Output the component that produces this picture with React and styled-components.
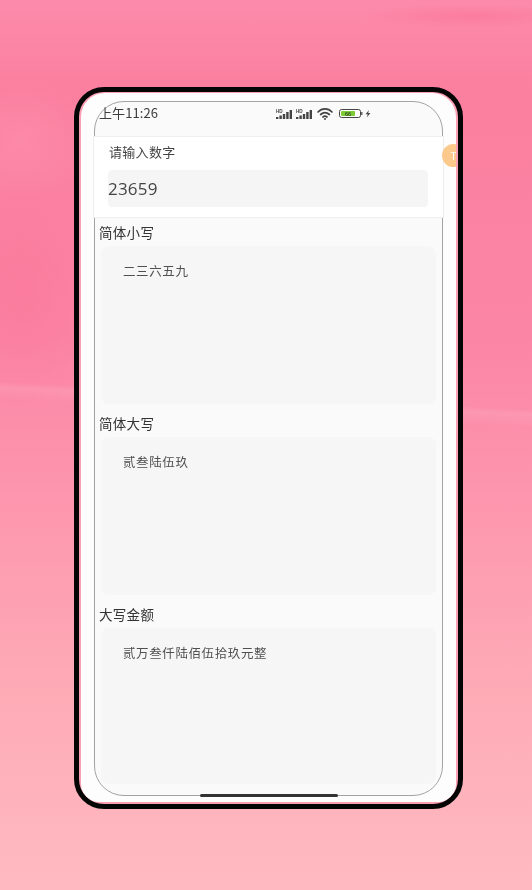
import React from 'react';
import styled, { createGlobalStyle } from 'styled-components';

const GlobalStyle = createGlobalStyle`
  html, body {
    margin: 0;
    padding: 0;
  }
  body {
    font-family: "Noto Sans CJK SC", "Open Sans", "Liberation Sans", sans-serif;
  }
`;

const Page = styled.div`
  box-sizing: border-box;
  width: 532px;
  height: 890px;
  padding: 87px 0 0 74px;
  overflow: hidden;
  background:
    radial-gradient(ellipse 110px 12px at 470px 16px, rgba(250, 105, 145, 0.4), transparent),
    linear-gradient(183deg, transparent 44.6%, rgba(255, 190, 205, 0.22) 45.2%, transparent 46.6%),
    radial-gradient(ellipse 90px 120px at 20px 290px, rgba(250, 115, 150, 0.5), transparent),
    radial-gradient(ellipse 70px 60px at 20px 140px, rgba(255, 160, 185, 0.3), transparent),
    linear-gradient(180deg, #fc8bab 0%, #fb7f9f 10%, #fb85a5 38%, #fd96ae 56%, #feabb6 78%, #ffbac1 100%);
`;

const Phone = styled.div`
  box-sizing: border-box;
  width: 389px;
  height: 722px;
  padding: 1px 2px 2px;
  border: 5px solid #050505;
  border-radius: 30px;
  background: #fb9fb5;
  overflow: hidden;
`;

const Screen = styled.div`
  position: relative;
  box-sizing: border-box;
  height: 100%;
  padding: 8px 13px 0;
  background: #fdfdfd;
  border-radius: 24px 24px 18px 18px;
  filter: blur(0.35px);
`;

const Frame = styled.div`
  position: relative;
  box-sizing: border-box;
  height: 695px;
  border: 1px solid #a3a3a3;
  border-radius: 30px;
  background: #fafafa;
`;

const StatusBar = styled.div`
  display: flex;
  align-items: center;
  height: 20px;
  padding: 0 0 0 4px;
  margin-bottom: 14px;
  color: #3c3c3c;
  font-size: 13px;
`;

const Clock = styled.span`
  width: 177px;
  font-family: "Noto Sans CJK SC", "Open Sans", sans-serif;
  letter-spacing: 0.1px;
`;

const StatusIcons = styled.svg`
  display: block;
  margin-top: 4px;
`;

const InputCard = styled.div`
  box-sizing: border-box;
  display: flex;
  flex-direction: column;
  gap: 9px;
  height: 82px;
  margin: 0 -2px 0 -2px;
  padding: 5px 15px 0 14px;
  background: #fff;
  border: 1px solid #eeeeee;
`;

const InputLabel = styled.div`
  padding-left: 1px;
  color: #444;
  font-size: 13px;
  line-height: 19px;
  letter-spacing: 0.3px;
`;

const InputValue = styled.div`
  height: 37px;
  background: #f5f5f5;
  border-radius: 4px;
  color: #444;
  font-family: "Open Sans", sans-serif;
  font-size: 17px;
  line-height: 38px;
  letter-spacing: 0.2px;
`;

const Section = styled.section`
  padding: 4px 0 0 0;
  & + & {
    padding-top: 9px;
  }
`;

const SectionTitle = styled.div`
  padding-left: 4px;
  margin-bottom: 4px;
  color: #333;
  font-size: 13.5px;
  line-height: 20px;
  letter-spacing: 0.3px;
`;

const ResultBox = styled.div`
  box-sizing: border-box;
  height: ${p => p.$height}px;
  margin: 0 6px;
  padding: 16px 22px;
  background: #f6f6f6;
  border-radius: 8px;
  color: #505050;
  font-size: 12.5px;
  line-height: 18px;
  letter-spacing: 0.6px;
`;

const FloatBadge = styled.div`
  position: absolute;
  top: 42px;
  right: -23px;
  width: 23px;
  height: 23px;
  border-radius: 50%;
  background: #fbc98c;
  color: #fff;
  font-size: 10px;
  line-height: 23px;
  text-align: center;
  clip-path: inset(0 9px 0 0);
`;

const HomeBar = styled.div`
  position: absolute;
  bottom: -2px;
  left: 50%;
  width: 138px;
  height: 3px;
  margin-left: -69px;
  border-radius: 2px;
  background: #333;
`;

const SignalIcon = ({ x }) => (
  <g transform={`translate(${x} 0)`} fill="#444">
    <text x="0" y="5" fontSize="4.6" fontWeight="700" fontFamily="Liberation Sans, sans-serif">HD</text>
    <rect x="0" y="9" width="2.4" height="2" />
    <rect x="3.4" y="7.5" width="2.4" height="3.5" />
    <rect x="6.8" y="6" width="2.4" height="5" />
    <rect x="10.2" y="4" width="2.4" height="7" />
    <rect x="13.6" y="2" width="2.4" height="9" />
  </g>
);

const StatusGlyphs = () => (
  <StatusIcons width="100" height="14" viewBox="0 0 100 14">
    <g transform="translate(0 1)">
      <SignalIcon x={0} />
      <SignalIcon x={20} />
    </g>
    <g transform="translate(41 0)" fill="none" stroke="#444" strokeLinecap="round">
      <path d="M1 5 C5 0.8 11 0.8 15 5" strokeWidth="1.7" />
      <path d="M3.6 7.5 C6.4 5 9.6 5 12.4 7.5" strokeWidth="1.7" />
      <path d="M6 10 C7.2 9 8.8 9 10 10" strokeWidth="1.7" />
      <circle cx="8" cy="12" r="1" fill="#444" stroke="none" />
    </g>
    <rect x="63.5" y="2.5" width="21" height="8" rx="2" fill="#fff" stroke="#444" />
    <rect x="65" y="4" width="14" height="5" rx="1" fill="#7ccd35" />
    <text x="72" y="8.6" fontSize="5.5" textAnchor="middle" fill="#222" fontFamily="Liberation Sans, sans-serif">66</text>
    <rect x="85.2" y="5" width="1.2" height="3" fill="#444" />
    <path d="M93 3 L89.6 7.3 H91.8 L90.8 10.4 L94.4 5.9 H92.1 Z" fill="#444" />
  </StatusIcons>
);

const results = [
  { title: '简体小写', text: '二三六五九', height: 158 },
  { title: '简体大写', text: '贰叁陆伍玖', height: 158 },
  { title: '大写金额', text: '贰万叁仟陆佰伍拾玖元整', height: 156 },
];

export default function App() {
  return (
    <Page>
      <GlobalStyle />
      <Phone>
        <Screen>
          <Frame>
            <StatusBar>
              <Clock>上午11:26</Clock>
              <StatusGlyphs />
            </StatusBar>
            <InputCard>
              <InputLabel>请输入数字</InputLabel>
              <InputValue>23659</InputValue>
            </InputCard>
            {results.map(r => (
              <Section key={r.title}>
                <SectionTitle>{r.title}</SectionTitle>
                <ResultBox $height={r.height}>{r.text}</ResultBox>
              </Section>
            ))}
            <FloatBadge>T</FloatBadge>
            <HomeBar />
          </Frame>
        </Screen>
      </Phone>
    </Page>
  );
}
